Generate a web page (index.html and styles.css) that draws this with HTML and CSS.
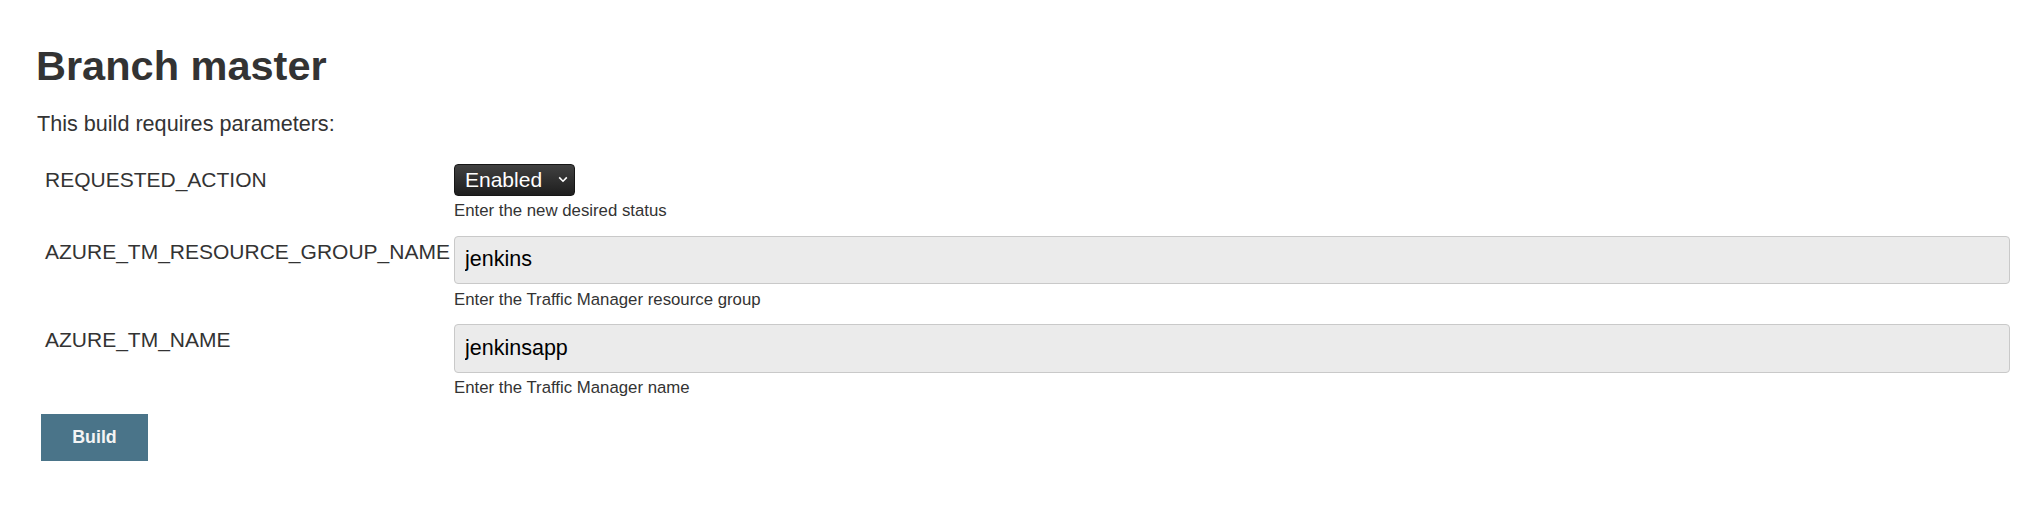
FILE: index.html
```html
<!DOCTYPE html>
<html lang="en">
<head>
<meta charset="utf-8">
<title>Branch master</title>
<link rel="stylesheet" href="styles.css">
</head>
<body>
<main class="page">
  <h1 class="title">Branch master</h1>
  <p class="intro">This build requires parameters:</p>
  <form class="params">
    <div class="param">
      <div class="param-name">REQUESTED_ACTION</div>
      <div class="param-main">
        <span class="select-wrap">
          <select class="select">
            <option>Enabled</option>
            <option>Disabled</option>
          </select>
          <svg class="chevron" width="10" height="7" viewBox="0 0 10 7" aria-hidden="true"><path d="M1.2 1.4 L5 5.2 L8.8 1.4" fill="none" stroke="#fff" stroke-width="1.6"/></svg>
        </span>
        <div class="param-desc">Enter the new desired status</div>
      </div>
    </div>
    <div class="param">
      <div class="param-name">AZURE_TM_RESOURCE_GROUP_NAME</div>
      <div class="param-main">
        <input class="text-input" type="text" value="jenkins">
        <div class="param-desc">Enter the Traffic Manager resource group</div>
      </div>
    </div>
    <div class="param">
      <div class="param-name">AZURE_TM_NAME</div>
      <div class="param-main">
        <input class="text-input" type="text" value="jenkinsapp">
        <div class="param-desc">Enter the Traffic Manager name</div>
      </div>
    </div>
    <div class="actions">
      <button class="build-btn" type="button">Build</button>
    </div>
  </form>
</main>
</body>
</html>
```

FILE: styles.css
```css
html, body {
  margin: 0;
  padding: 0;
  background: #fff;
}

body {
  font-family: "Liberation Sans", Arial, Helvetica, sans-serif;
  color: #333;
  font-size: 21.33px;
}

.page {
  padding: 41px 20px 0 36px;
}

.title {
  margin: 0;
  font-size: 41.5px;
  line-height: 1.2;
  font-weight: bold;
  color: #333;
}

.intro {
  margin: 18px 0 0 1px;
  font-size: 21.6px;
  line-height: 1.4;
}

.params {
  margin-top: 24.5px;
  display: flex;
  flex-direction: column;
}

.param {
  display: grid;
  grid-template-columns: 409px 1fr;
  margin-left: 9px;
  margin-bottom: 13px;
}

.param-name {
  padding-top: 3px;
  font-size: 21px;
  line-height: 1.2;
  white-space: nowrap;
  color: #333;
}

.param-main {
  display: flex;
  flex-direction: column;
  align-items: stretch;
  min-width: 0;
}

.select-wrap {
  position: relative;
  display: inline-block;
  align-self: flex-start;
}

.select {
  appearance: none;
  -webkit-appearance: none;
  display: block;
  width: 121px;
  height: 32px;
  margin: 0;
  padding: 0 0 0 10px;
  border: 1px solid #161616;
  border-radius: 4px;
  background: linear-gradient(#414141, #1e1e1e);
  color: #fff;
  font-family: "Liberation Sans", Arial, Helvetica, sans-serif;
  font-size: 21px;
  line-height: 30px;
  box-sizing: border-box;
}

.chevron {
  position: absolute;
  right: 7px;
  top: 12px;
  pointer-events: none;
}

.text-input {
  display: block;
  width: 100%;
  height: 48.5px;
  margin: 0;
  padding: 0 10px;
  box-sizing: border-box;
  border: 1px solid #c9c9c9;
  border-radius: 4px;
  background: #ebebeb;
  color: #000;
  font-family: "Liberation Sans", Arial, Helvetica, sans-serif;
  font-size: 21.5px;
}

.param-desc {
  margin-top: 4.5px;
  font-size: 16.8px;
  line-height: 1.35;
  color: #333;
}

.actions {
  margin-left: 5px;
  margin-top: 0.5px;
}

.build-btn {
  width: 107px;
  height: 47px;
  padding: 0;
  border: none;
  border-radius: 0;
  background: #4a7489;
  color: #f4f4f4;
  font-family: "Liberation Sans", Arial, Helvetica, sans-serif;
  font-weight: bold;
  font-size: 17.8px;
}
```
